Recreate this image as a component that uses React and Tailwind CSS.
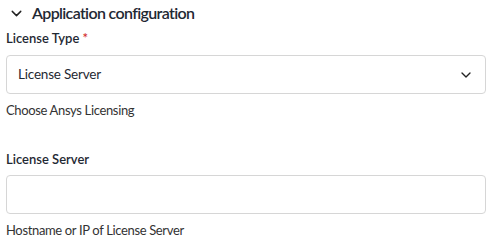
import React, { useState } from 'react';
import { ChevronDown } from 'lucide-react';

export default function App() {
  const [server, setServer] = useState("");

  return (
    <div className="w-[492px] h-[247px] bg-white font-['Lato',sans-serif] text-[#1f2933] px-[6px] pt-[2px]">
      {/* SECTION HEADER */}
      <div className="flex items-center h-[22px] pl-[2px] gap-[7px]">
        <ChevronDown size={17} strokeWidth={2} className="text-[#222]" />
        <h2 className="text-[16px] font-semibold leading-none tracking-[-0.65px]">Application configuration</h2>
      </div>

      {/* LICENSE TYPE */}
      <label className="block mt-[5px] text-[13px] font-semibold leading-[18px]">
        License Type <span className="text-[#d32f2f]">*</span>
      </label>
      <div className="mt-[8px] h-[39px] w-[480px] border border-[#d6d6d6] rounded-[4px] flex items-center justify-between pl-[11px] pr-[11px]">
        <span className="text-[13.5px] tracking-[-0.2px]">License Server</span>
        <ChevronDown size={16} strokeWidth={2} className="text-[#222]" />
      </div>
      <p className="mt-[7px] text-[13px] leading-[18px] text-[#333] tracking-[-0.35px]">Choose Ansys Licensing</p>

      {/* LICENSE SERVER */}
      <label className="block mt-[31px] text-[13px] font-semibold leading-[18px]">License Server</label>
      <input
        value={server}
        onChange={(e) => setServer(e.target.value)}
        className="block mt-[7px] h-[39px] w-[480px] border border-[#d6d6d6] rounded-[4px] px-[11px] text-[14px] outline-none"
      />
      <p className="mt-[7px] text-[13px] leading-[18px] text-[#333] tracking-[-0.35px]">Hostname or IP of License Server</p>
    </div>
  );
}
